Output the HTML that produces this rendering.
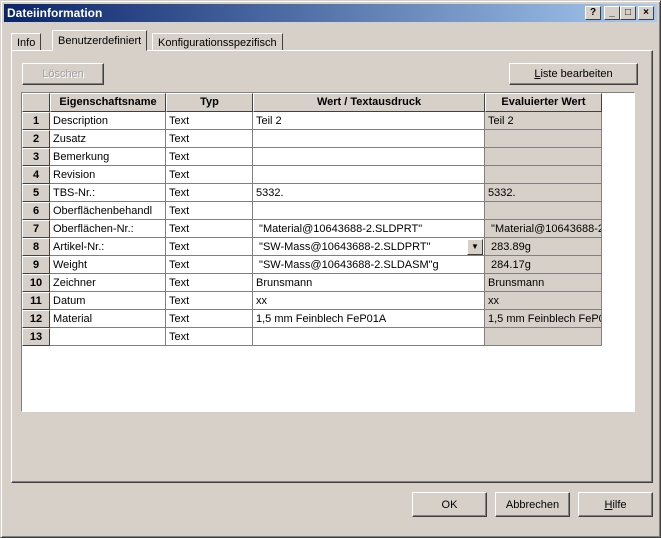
<!DOCTYPE html>
<html><head><meta charset="utf-8"><style>
*{box-sizing:border-box;margin:0;padding:0}
body{width:661px;height:538px;overflow:hidden;background:#d6d0c8;font-family:"Liberation Sans",Tahoma,sans-serif;font-size:11px;color:#000;position:relative}
.a{position:absolute}
.win{left:0;top:0;width:661px;height:538px;border:1px solid;border-color:#d6d0c8 #404040 #404040 #d6d0c8;box-shadow:inset 1px 1px 0 #fff,inset -1px -1px 0 #808080}
.title{left:4px;top:4px;width:653px;height:18px;background:linear-gradient(90deg,#0a246a,#a6caf0);color:#fff;font-weight:bold;font-size:12px;line-height:18px;padding-left:3px}
.tb{top:6px;width:16px;height:14px;background:#d6d0c8;border:1px solid;border-color:#fff #404040 #404040 #fff;font-size:10px;font-weight:bold;text-align:center;line-height:12px;color:#000}
.btn{background:#d6d0c8;border:1px solid;border-color:#fff #404040 #404040 #fff;box-shadow:inset -1px -1px 0 #808080;text-align:center;font-size:11px}
.tab{border:1px solid;border-color:#fff #404040 transparent #fff;border-bottom:none;height:18px;line-height:18px;padding:0 5px;background:#d6d0c8}
.panel{left:11px;top:50px;width:642px;height:433px;border:1px solid;border-color:#fff #404040 #404040 #fff;box-shadow:inset -1px -1px 0 #808080}
.grid{left:21px;top:92px;width:614px;height:320px;background:#fff;border:1px solid;border-color:#808080 #fff #fff #808080}
.c{position:absolute;height:18px;line-height:19px;border-right:1px solid #808080;border-bottom:1px solid #808080;padding-left:3px;white-space:nowrap;overflow:hidden}
.h{background:#d6d0c8;font-weight:bold;text-align:center;padding:0;border:1px solid;border-color:#fff #404040 #404040 #fff;line-height:17px}
.e{background:#d6d0c8}
</style></head><body>
<div class="a win"></div>
<div class="a title">Dateiinformation</div>
<div class="a tb" style="left:585px">?</div>
<div class="a tb" style="left:604px">_</div>
<div class="a tb" style="left:620px">□</div>
<div class="a tb" style="left:638px">×</div>
<div class="a panel"></div>
<div class="a tab" style="left:11px;top:33px;height:17px">Info</div>
<div class="a tab" style="left:152px;top:33px;height:17px">Konfigurationsspezifisch</div>
<div class="a tab" style="left:52px;top:30px;height:21px;padding-top:1px;border-bottom:1px solid #d6d0c8">Benutzerdefiniert</div>
<div class="a btn" style="left:22px;top:63px;width:82px;height:22px;line-height:21px;color:#a0a0a0;text-shadow:1px 1px 0 #fff">Löschen</div>
<div class="a btn" style="left:509px;top:63px;width:129px;height:22px;line-height:21px"><u>L</u>iste bearbeiten</div>
<div class="a grid" id="g"></div>
<div class="a btn" style="left:412px;top:492px;width:75px;height:25px;line-height:25px">OK</div>
<div class="a btn" style="left:495px;top:492px;width:75px;height:25px;line-height:25px">Abbrechen</div>
<div class="a btn" style="left:578px;top:492px;width:75px;height:25px;line-height:25px"><u>H</u>ilfe</div>
<script>
var g=document.getElementById('g');
var cols=[[0,28],[28,116],[144,87],[231,232],[463,117]];
var rows=[["Description","Text","Teil 2","Teil 2"],["Zusatz","Text","",""],["Bemerkung","Text","",""],["Revision","Text","",""],["TBS-Nr.:","Text","5332.","5332."],["Oberflächenbehandl","Text","",""],["Oberflächen-Nr.:","Text"," \"Material@10643688-2.SLDPRT\""," \"Material@10643688-2"],["Artikel-Nr.:","Text"," \"SW-Mass@10643688-2.SLDPRT\""," 283.89g"],["Weight","Text"," \"SW-Mass@10643688-2.SLDASM\"g"," 284.17g"],["Zeichner","Text","Brunsmann","Brunsmann"],["Datum","Text","xx","xx"],["Material","Text","1,5 mm Feinblech FeP01A","1,5 mm Feinblech FeP0"],["","Text","",""]];
var h='';var hd=["","Eigenschaftsname","Typ","Wert / Textausdruck","Evaluierter Wert"];
for(var i=0;i<5;i++)h+='<div class="c h" style="left:'+cols[i][0]+'px;top:0;width:'+cols[i][1]+'px;height:19px">'+hd[i]+'</div>';
for(var r=0;r<13;r++){var t=19+r*18;
h+='<div class="c h" style="left:0;top:'+t+'px;width:28px">'+(r+1)+'</div>';
for(var i=1;i<5;i++){var v=rows[r][i-1].replace(/ /g,'&nbsp;');
h+='<div class="c'+(i==4?' e':'')+'" style="left:'+cols[i][0]+'px;top:'+t+'px;width:'+cols[i][1]+'px">'+v+'</div>';}}
h+='<div class="c h" style="left:445px;top:'+(19+7*18+1)+'px;width:16px;height:16px;font-size:8px;line-height:14px">▼</div>';
g.innerHTML=h;
</script>
</body></html>
